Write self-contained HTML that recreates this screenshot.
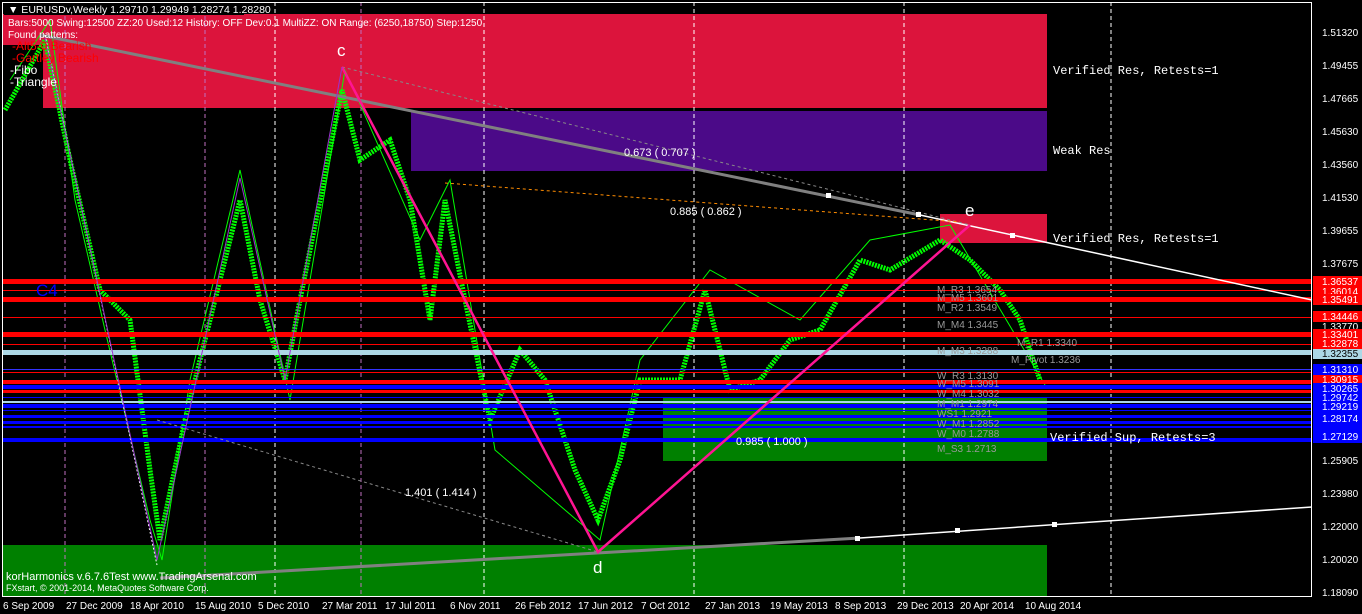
<!DOCTYPE html>
<html><head><meta charset="utf-8"><style>
body{margin:0;background:#000;width:1362px;height:614px;overflow:hidden;font-family:"Liberation Sans",sans-serif}
svg{display:block}
text{font-family:"Liberation Sans",sans-serif}
.m{font-family:"Liberation Mono",monospace;font-size:12px;fill:#fff}
.ax{font-size:10px;fill:#fff}
</style></head><body>
<svg width="1362" height="614" viewBox="0 0 1362 614">
<rect width="1362" height="614" fill="#000"/>
<rect x="2" y="14" width="1045" height="94" fill="#dc143c"/>
<rect x="411" y="111" width="636" height="60" fill="#4b0a88"/>
<rect x="940" y="214" width="107" height="29" fill="#dc143c"/>
<rect x="2" y="545" width="1045" height="51" fill="#008000"/>
<rect x="663" y="398" width="384" height="63" fill="#008000"/>
<rect x="3" y="45" width="40" height="63" fill="#000"/>
<g stroke="#fff" stroke-dasharray="4,3" stroke-width="1">
<line x1="275" y1="2" x2="275" y2="596"/><line x1="484" y1="2" x2="484" y2="596"/>
<line x1="694" y1="2" x2="694" y2="596"/><line x1="904" y1="2" x2="904" y2="596"/>
<line x1="1111" y1="2" x2="1111" y2="596"/>
</g>
<g stroke="#c070c0" stroke-dasharray="4,3" stroke-width="1">
<line x1="65" y1="2" x2="65" y2="596"/><line x1="205" y1="2" x2="205" y2="596"/><line x1="361" y1="2" x2="361" y2="596"/>
</g>
<polyline fill="none" stroke="#00ff00" stroke-width="5" stroke-dasharray="2,1" points="5,110 45,40 70,160 100,290 130,320 150,470 160,540 185,420 215,300 240,200 260,300 285,380 300,300 330,150 342,90 360,160 390,140 410,200 430,320 445,200 465,300 490,420 520,350 545,380 575,470 598,520 620,460 640,380 680,380 705,290 730,390 760,380 790,340 820,330 860,260 890,270 940,240 970,260 1000,290 1020,320 1040,380"/>
<polyline fill="none" stroke="#00ff00" stroke-width="1" points="10,80 50,20 75,200 105,330 150,520 162,560 190,380 240,170 290,400 345,70 420,240 450,180 495,450 600,540 640,360 710,270 800,320 870,240 950,225 1045,385"/>
<g>
<rect x="2" y="279" width="1310" height="5" fill="#f00"/>
<rect x="2" y="290" width="1310" height="1" fill="#f00"/>
<rect x="2" y="297" width="1310" height="5" fill="#f00"/>
<rect x="2" y="317" width="1310" height="1" fill="#f00"/>
<rect x="2" y="332" width="1310" height="5" fill="#f00"/>
<rect x="2" y="344" width="1310" height="1" fill="#f00"/>
<rect x="2" y="350" width="1310" height="5" fill="#add8e6"/>
<rect x="2" y="369" width="1310" height="1" fill="#33f"/>
<rect x="2" y="372" width="1310" height="1" fill="#f00"/>
<rect x="2" y="380" width="1310" height="4" fill="#f00"/>
<rect x="2" y="385" width="1310" height="4" fill="#00f"/>
<rect x="2" y="390" width="1310" height="3" fill="#f00"/>
<rect x="2" y="397" width="1310" height="1" fill="#00f"/>
<rect x="2" y="401" width="1310" height="2" fill="#add8e6"/>
<rect x="2" y="404" width="1310" height="4" fill="#00f"/>
<rect x="2" y="410" width="1310" height="1" fill="#00f"/>
<rect x="2" y="415" width="1310" height="3" fill="#00f"/>
<rect x="2" y="421" width="1310" height="3" fill="#00f"/>
<rect x="2" y="426" width="1310" height="2" fill="#00f"/>
<rect x="2" y="438" width="1310" height="4" fill="#00f"/>
</g>
<line x1="40" y1="35" x2="920" y2="215" stroke="#808080" stroke-width="3"/>
<line x1="920" y1="215" x2="1312" y2="300" stroke="#fff" stroke-width="1.5"/>
<line x1="160" y1="578" x2="860" y2="538" stroke="#808080" stroke-width="3"/>
<line x1="860" y1="538" x2="1312" y2="507" stroke="#fff" stroke-width="1.5"/>
<line x1="342" y1="67" x2="970" y2="225" stroke="#888" stroke-dasharray="3,3"/>
<line x1="445" y1="183" x2="960" y2="222" stroke="#ff8c00" stroke-dasharray="3,3"/>
<line x1="157" y1="420" x2="598" y2="552" stroke="#888" stroke-dasharray="3,3"/>
<polyline fill="none" stroke="#ff1493" stroke-width="2.5" points="342,67 598,552 970,225"/>
<polyline fill="none" stroke="#fff" stroke-width="1" stroke-dasharray="2,2" points="45,35 157,565"/>
<polyline fill="none" stroke="#9932cc" stroke-width="1" points="45,38 157,560 240,178 285,380 342,67"/>
<g fill="#fff"><rect x="826" y="193" width="5" height="5"/><rect x="916" y="212" width="5" height="5"/><rect x="1010" y="233" width="5" height="5"/><rect x="855" y="536" width="5" height="5"/><rect x="955" y="528" width="5" height="5"/><rect x="1052" y="522" width="5" height="5"/></g>
<text x="337" y="56" font-size="17" fill="#fff">c</text>
<text x="965" y="216" font-size="17" fill="#fff">e</text>
<text x="593" y="573" font-size="17" fill="#fff">d</text>
<text x="36" y="296" font-size="17" fill="#00f">C4</text>
<text x="624" y="156" font-size="11" fill="#fff">0.673 ( 0.707 )</text>
<text x="670" y="215" font-size="11" fill="#fff">0.885 ( 0.862 )</text>
<text x="736" y="445" font-size="11" fill="#fff">0.985 ( 1.000 )</text>
<text x="405" y="496" font-size="11" fill="#fff">1.401 ( 1.414 )</text>
<text x="1053" y="74" class="m">Verified Res, Retests=1</text>
<text x="1053" y="154" class="m">Weak Res</text>
<text x="1053" y="242" class="m">Verified Res, Retests=1</text>
<text x="1050" y="441" class="m">Verified Sup, Retests=3</text>
<g font-size="10" fill="#999">
<text x="937" y="293">M_R3 1.3654</text><text x="937" y="301">M_M5 1.3601</text><text x="937" y="311">M_R2 1.3549</text>
<text x="937" y="328">M_M4 1.3445</text><text x="1017" y="346">M_R1 1.3340</text><text x="937" y="354">M_M3 1.3288</text>
<text x="1011" y="363">M_Pivot 1.3236</text><text x="937" y="379">W_R3 1.3130</text><text x="937" y="387">W_M5 1.3091</text>
<text x="937" y="397">W_M4 1.3032</text><text x="937" y="407">M_M1 1.2974</text><text x="937" y="417">WS1 1.2921</text>
<text x="937" y="427">W_M1 1.2852</text><text x="937" y="437">W_M0 1.2788</text><text x="937" y="452">M_S3 1.2713</text>
</g>
<rect x="4" y="3" width="240" height="12" fill="#000"/>
<text x="8" y="13" font-size="10.5" fill="#fff">▼ EURUSDv,Weekly  1.29710 1.29949 1.28274 1.28280</text>
<text x="8" y="26" font-size="10" fill="#fff">Bars:5000  Swing:12500  ZZ:20  Used:12  History: OFF Dev:0.1  MultiZZ: ON  Range: (6250,18750)  Step:1250</text>
<text x="8" y="38" font-size="10" fill="#fff">Found patterns:</text>
<text x="12" y="50" font-size="12" fill="#f00">-Alt5-0 Bearish</text>
<text x="12" y="62" font-size="12" fill="#f00">-Gartley Bearish</text>
<text x="10" y="74" font-size="12" fill="#fff">-Fibo</text>
<text x="10" y="86" font-size="12" fill="#fff">-Triangle</text>
<text x="6" y="580" font-size="11" fill="#fff">korHarmonics v.6.7.6Test www.TradingArsenal.com</text>
<text x="6" y="591" font-size="9" fill="#fff">FXstart, © 2001-2014, MetaQuotes Software Corp.</text>
<rect x="2.5" y="2.5" width="1309" height="594" fill="none" stroke="#fff"/>
<g class="ax">
<text x="1322" y="36">1.51320</text><text x="1322" y="69">1.49455</text><text x="1322" y="102">1.47665</text>
<text x="1322" y="135">1.45630</text><text x="1322" y="168">1.43560</text><text x="1322" y="201">1.41530</text>
<text x="1322" y="234">1.39655</text><text x="1322" y="267">1.37675</text><text x="1322" y="330">1.33770</text>
<text x="1322" y="464">1.25905</text><text x="1322" y="497">1.23980</text><text x="1322" y="530">1.22000</text>
<text x="1322" y="563">1.20020</text><text x="1322" y="596">1.18090</text>
</g>
<g font-size="10">
<rect x="1313" y="276" width="49" height="11" fill="#f00"/><text x="1322" y="285" fill="#fff">1.36537</text>
<rect x="1313" y="286" width="49" height="11" fill="#f00"/><text x="1322" y="295" fill="#fff">1.36014</text>
<rect x="1313" y="294" width="49" height="11" fill="#f00"/><text x="1322" y="303" fill="#fff">1.35491</text>
<rect x="1313" y="311" width="49" height="11" fill="#f00"/><text x="1322" y="320" fill="#fff">1.34446</text>
<rect x="1313" y="329" width="49" height="11" fill="#f00"/><text x="1322" y="338" fill="#fff">1.33401</text>
<rect x="1313" y="339" width="49" height="10" fill="#f00"/><text x="1322" y="347" fill="#fff">1.32878</text>
<rect x="1313" y="349" width="49" height="10" fill="#add8e6"/><text x="1322" y="357" fill="#000">1.32355</text>
<rect x="1313" y="364" width="49" height="11" fill="#00f"/><text x="1322" y="373" fill="#fff">1.31310</text>
<rect x="1313" y="375" width="49" height="9" fill="#f00"/><text x="1322" y="383" fill="#fff">1.30915</text>
<rect x="1313" y="383" width="49" height="60" fill="#00f"/>
<text x="1322" y="392" fill="#fff">1.30265</text><text x="1322" y="401" fill="#fff">1.29742</text>
<text x="1322" y="410" fill="#fff">1.29219</text><text x="1322" y="422" fill="#fff">1.28174</text>
<text x="1322" y="440" fill="#fff">1.27129</text>
</g>
<g class="ax">
<text x="3" y="609">6 Sep 2009</text><text x="66" y="609">27 Dec 2009</text><text x="130" y="609">18 Apr 2010</text>
<text x="195" y="609">15 Aug 2010</text><text x="258" y="609">5 Dec 2010</text><text x="322" y="609">27 Mar 2011</text>
<text x="385" y="609">17 Jul 2011</text><text x="450" y="609">6 Nov 2011</text><text x="515" y="609">26 Feb 2012</text>
<text x="578" y="609">17 Jun 2012</text><text x="641" y="609">7 Oct 2012</text><text x="705" y="609">27 Jan 2013</text>
<text x="770" y="609">19 May 2013</text><text x="835" y="609">8 Sep 2013</text><text x="897" y="609">29 Dec 2013</text>
<text x="960" y="609">20 Apr 2014</text><text x="1025" y="609">10 Aug 2014</text>
</g>
</svg>
</body></html>
